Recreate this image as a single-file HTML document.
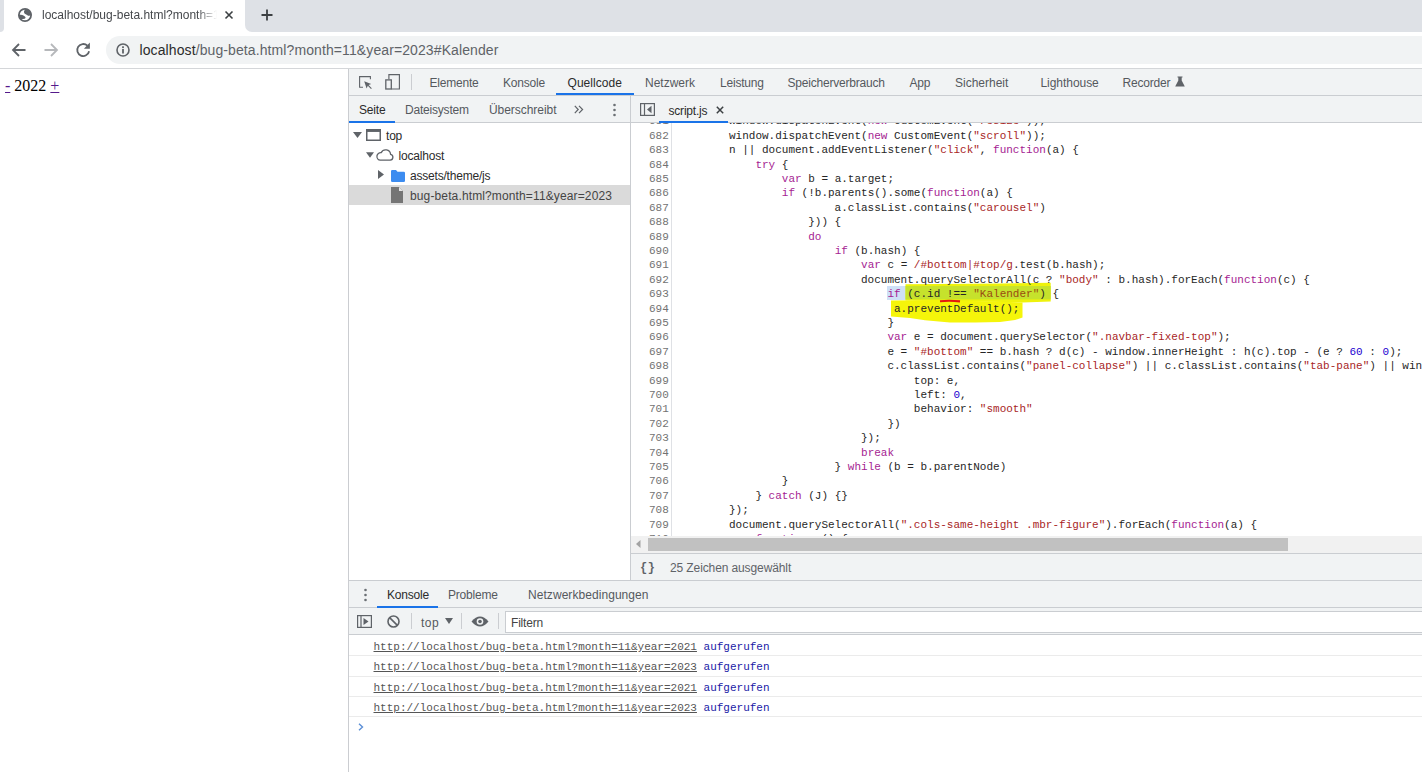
<!DOCTYPE html>
<html><head><meta charset="utf-8">
<style>
*{margin:0;padding:0;box-sizing:border-box}
html,body{width:1422px;height:772px;overflow:hidden;background:#fff;position:relative}
body{font-family:"Liberation Sans",sans-serif;font-size:12px;color:#333}
.a{position:absolute}
.t{position:absolute;white-space:pre;line-height:14px;font-size:12px;letter-spacing:-0.2px;color:#55595e}
.bg{position:absolute}
svg{position:absolute;overflow:visible}
.mono{font-family:"Liberation Mono",monospace;font-size:11px}
.ln{position:absolute;left:0;width:37.8px;text-align:right;font-family:"Liberation Mono",monospace;font-size:11px;line-height:14.4px;color:#727272;white-space:pre}
.cl{position:absolute;left:45.2px;font-family:"Liberation Mono",monospace;font-size:11px;line-height:14.4px;color:#262626;white-space:pre}
i{font-style:normal}
i.k{color:#a51d92}
i.s{color:#a8261f}
i.n{color:#1c00cf}
.cm{position:absolute;left:373.5px;font-family:"Liberation Mono",monospace;font-size:11px;line-height:14px;white-space:pre;color:#555}
.cm u{color:#555;text-decoration:underline}
.cm b{font-weight:normal;color:#1a1aa6}
</style></head><body>

<!-- Chrome tab strip -->
<div class="bg" style="left:0;top:0;width:4px;height:32px;background:#dee1e6;border-bottom-right-radius:5px"></div>
<div class="bg" style="left:245px;top:0;width:1177px;height:32px;background:#dee1e6;border-bottom-left-radius:7px"></div>
<div class="bg" style="left:0;top:0;width:1422px;height:68px;background:transparent"></div>
<div class="bg" style="left:0;top:32px;width:1422px;height:36px;background:#fff"></div>
<div class="bg" style="left:0;top:68px;width:1422px;height:1px;background:#d4d6d9"></div>

<!-- tab -->
<svg style="left:18px;top:7.75px" width="14" height="14" viewBox="0 0 14 14">
  <defs><clipPath id="gc"><circle cx="7" cy="7" r="6.5"/></clipPath></defs>
  <circle cx="7" cy="7" r="6.1" fill="#fff" stroke="#5f6368" stroke-width="1.8"/>
  <g clip-path="url(#gc)" fill="#5f6368">
  <path d="M7.8 0.5C6.4 2.0 5.6 3.6 6.2 4.9C6.8 6.2 8.6 6.4 9.4 7.3C10.4 8.2 12.2 8.0 14 6.8L14 0Z"/>
  <path d="M0 6.9C2.5 6.7 4.8 7.0 6.6 8.2C7.9 9.0 7.9 10.2 6.6 10.7C5.2 11.1 3.0 11.0 0 11Z"/>
  </g>
</svg>
<div class="t" style="left:42px;top:8px;color:#45484c;letter-spacing:0;width:175px;overflow:hidden;-webkit-mask-image:linear-gradient(to right,#000 155px,transparent 175px)">localhost/bug-beta.html?month=11&amp;year=2023#Kalender</div>
<svg style="left:224px;top:10px" width="10" height="10" viewBox="0 0 10 10"><path d="M1.5 1.5L8.5 8.5M8.5 1.5L1.5 8.5" stroke="#3c4043" stroke-width="1.6"/></svg>
<svg style="left:261px;top:9px" width="12" height="12" viewBox="0 0 12 12"><path d="M6 0.5V11.5M0.5 6H11.5" stroke="#3c4043" stroke-width="1.8"/></svg>

<!-- toolbar -->
<svg style="left:12px;top:43px" width="14" height="14" viewBox="0 0 14 14"><path d="M13.5 7H1.5M7 1L1 7L7 13" fill="none" stroke="#5f6368" stroke-width="1.8"/></svg>
<svg style="left:44px;top:43px" width="14" height="14" viewBox="0 0 14 14"><path d="M0.5 7H12.5M7 1L13 7L7 13" fill="none" stroke="#b6b8bb" stroke-width="1.8"/></svg>
<svg style="left:76px;top:43px" width="14" height="14" viewBox="0 0 14 14"><path d="M13.1 8.2A6 6 0 1 1 11.4 2.7" fill="none" stroke="#5f6368" stroke-width="1.8"/><path d="M13.9 -0.5V5.7H7.9Z" fill="#5f6368"/></svg>
<div class="bg" style="left:106px;top:36px;width:1330px;height:28px;background:#f1f3f4;border-radius:14px"></div>
<svg style="left:116px;top:43px" width="14" height="14" viewBox="0 0 14 14"><circle cx="7" cy="7" r="6" fill="none" stroke="#5f6368" stroke-width="1.6"/><rect x="6.1" y="6" width="1.8" height="4.5" fill="#5f6368"/><rect x="6.1" y="3.3" width="1.8" height="1.8" fill="#5f6368"/></svg>
<div class="t" style="left:139.5px;top:42px;font-size:14px;line-height:16px;letter-spacing:0.1px;color:#2b2b2b">localhost<span style="color:#5f6368">/bug-beta.html?month=11&amp;year=2023#Kalender</span></div>

<!-- page content -->
<div class="t" style="left:5px;top:77px;font-family:'Liberation Serif',serif;font-size:16px;line-height:18px;letter-spacing:0;color:#000"><span style="color:#551a8b;text-decoration:underline">-</span> 2022 <span style="color:#551a8b;text-decoration:underline">+</span></div>

<!-- DevTools -->
<div class="bg" style="left:348px;top:69px;width:1px;height:703px;background:#cbcdd1"></div>
<div class="bg" style="left:349px;top:69px;width:1073px;height:26px;background:#f1f3f4"></div>
<div class="bg" style="left:349px;top:95px;width:1073px;height:1px;background:#cacdd1"></div>


<!-- main toolbar icons -->
<svg style="left:359px;top:76px" width="14" height="14" viewBox="0 0 14 14"><path d="M4 11.2H0.6V0.6H11.4V3.2" fill="none" stroke="#5f6368" stroke-width="1.1"/><path d="M5.2 5.2L12.2 7.9L9.6 9L12.8 12.2L12 13L8.8 9.8L7.6 12.4Z" fill="#5f6368"/></svg>
<svg style="left:385px;top:74px" width="16" height="16" viewBox="0 0 16 16"><path d="M3.9 5.3V0.6H14.4V15H6.5" fill="none" stroke="#5f6368" stroke-width="1.15"/><rect x="0.8" y="5.9" width="5.5" height="9.1" fill="none" stroke="#5f6368" stroke-width="1.3"/></svg>
<div class="bg" style="left:411px;top:74px;width:1px;height:16px;background:#cbcdd1"></div>
<div class="t" style="left:429.5px;top:76px">Elemente</div>
<div class="t" style="left:503px;top:76px">Konsole</div>
<div class="t" style="left:567.5px;top:76px;color:#2b2b2b;letter-spacing:0.05px">Quellcode</div>
<div class="bg" style="left:556px;top:93px;width:78px;height:2px;background:#1a73e8"></div>
<div class="t" style="left:645px;top:76px;letter-spacing:0">Netzwerk</div>
<div class="t" style="left:720px;top:76px">Leistung</div>
<div class="t" style="left:787.5px;top:76px">Speicherverbrauch</div>
<div class="t" style="left:909.5px;top:76px">App</div>
<div class="t" style="left:955px;top:76px;letter-spacing:0">Sicherheit</div>
<div class="t" style="left:1040.5px;top:76px;letter-spacing:-0.05px">Lighthouse</div>
<div class="t" style="left:1122.5px;top:76px">Recorder</div>
<svg style="left:1175px;top:76px" width="10" height="11" viewBox="0 0 10 11"><path d="M2.5 0.5H7.5V1.5H6.7V4.5L9.8 10.5H0.2L3.3 4.5V1.5H2.5Z" fill="#5f6368"/></svg>

<!-- Sources navigator -->
<div class="bg" style="left:349px;top:96px;width:281px;height:26px;background:#f1f3f4"></div>
<div class="bg" style="left:349px;top:122px;width:1073px;height:1px;background:#cacdd1"></div>
<div class="bg" style="left:630px;top:96px;width:1px;height:484px;background:#cacdd1"></div>
<div class="t" style="left:359px;top:103px;color:#2b2b2b">Seite</div>
<div class="bg" style="left:349px;top:121px;width:46px;height:2px;background:#1a73e8"></div>
<div class="t" style="left:405px;top:103px">Dateisystem</div>
<div class="t" style="left:489px;top:103px;letter-spacing:-0.05px">Überschreibt</div>
<svg style="left:574px;top:105px" width="10" height="9" viewBox="0 0 10 9"><path d="M0.8 0.8L4.2 4.5L0.8 8.2M5 0.8L8.6 4.5L5 8.2" fill="none" stroke="#5f6368" stroke-width="1.2"/></svg>
<svg style="left:612px;top:103px" width="5" height="14" viewBox="0 0 5 14"><circle cx="2.5" cy="2" r="1.3" fill="#6b6f74"/><circle cx="2.5" cy="7" r="1.3" fill="#6b6f74"/><circle cx="2.5" cy="12" r="1.3" fill="#6b6f74"/></svg>

<!-- tree -->
<svg style="left:353px;top:132px" width="9" height="6" viewBox="0 0 9 6"><path d="M0 0H9L4.5 6Z" fill="#5f6368"/></svg>
<svg style="left:366px;top:129px" width="15" height="12" viewBox="0 0 15 12"><rect x="0.75" y="0.75" width="13.5" height="10.5" fill="none" stroke="#5f6368" stroke-width="1.5"/><rect x="0.75" y="0.75" width="13.5" height="2.2" fill="#5f6368"/></svg>
<div class="t" style="left:386px;top:129px;color:#2b2b2b">top</div>
<svg style="left:366px;top:152px" width="8" height="6" viewBox="0 0 9 6"><path d="M0 0H9L4.5 6Z" fill="#5f6368"/></svg>
<svg style="left:376px;top:149px" width="18" height="12" viewBox="0 0 18 12"><path d="M4.3 11.2H14.2A3 3 0 0 0 14.6 5.3A5 5 0 0 0 5.2 3.6A3.8 3.8 0 0 0 4.3 11.2Z" fill="none" stroke="#5f6368" stroke-width="1.3"/></svg>
<div class="t" style="left:398.5px;top:149px;color:#2b2b2b">localhost</div>
<svg style="left:378px;top:170px" width="6" height="9" viewBox="0 0 6 9"><path d="M0 0V9L6 4.5Z" fill="#5f6368"/></svg>
<svg style="left:391px;top:170px" width="14" height="12" viewBox="0 0 14 12"><path d="M0 1.2Q0 0 1.2 0H5L6.5 1.8H12.8Q14 1.8 14 3V10.8Q14 12 12.8 12H1.2Q0 12 0 10.8Z" fill="#3c8cf0"/></svg>
<div class="t" style="left:410px;top:169px;color:#2b2b2b">assets/theme/js</div>
<div class="bg" style="left:349px;top:185px;width:281px;height:20px;background:#dadada"></div>
<svg style="left:391px;top:187px" width="12" height="16" viewBox="0 0 12 16"><path d="M0 0H8L12 4V16H0Z" fill="#757575"/><path d="M8 0V4H12Z" fill="#e6e6e6"/></svg>
<div class="t" style="left:410px;top:189px;color:#444;letter-spacing:0.13px">bug-beta.html?month=11&amp;year=2023</div>

<!-- editor toolbar -->
<div class="bg" style="left:631px;top:96px;width:791px;height:26px;background:#f1f3f4"></div>
<div class="bg" style="left:631px;top:122px;width:791px;height:1px;background:#cacdd1"></div>
<svg style="left:640px;top:103px" width="15" height="13" viewBox="0 0 15 13"><rect x="0.6" y="0.6" width="13.8" height="11.8" fill="none" stroke="#5f6368" stroke-width="1.2"/><path d="M4.5 0.6V12.4" stroke="#5f6368" stroke-width="1.2"/><path d="M11.5 2.8V10.2L7 6.5Z" fill="#5f6368"/></svg>
<div class="t" style="left:668.5px;top:104px;color:#2b2b2b">script.js</div>
<svg style="left:716px;top:106px" width="8" height="8" viewBox="0 0 8 8"><path d="M0.8 0.8L7.2 7.2M7.2 0.8L0.8 7.2" stroke="#3c4043" stroke-width="1.5"/></svg>
<div class="bg" style="left:659px;top:121px;width:69px;height:2px;background:#1a73e8"></div>

<div id="code" style="position:absolute;left:631px;top:123px;width:791px;height:413px;overflow:hidden;background:#fff">
<div class="bg" style="left:40px;top:0;width:1px;height:413px;background:#dfe1e5"></div>
<!--HL-->
<div class="bg" style="left:256px;top:163px;width:19px;height:13.5px;background:#cfe0f6"></div>
<svg style="left:0;top:0" width="791" height="413"><polygon points="274.5,161.2 369.0,160.6 419.7,159.8 419.7,178.5 391.5,179.4 274.5,177.5" fill="#eef20c"/><polygon points="260.0,177.5 309.0,177.0 391.5,179.5 391.5,194.5 384.0,197.0 369.0,199.0 344.0,199.6 319.0,199.6 294.0,197.2 279.0,195.0 260.0,193.5" fill="#f5f50a"/><rect x="274.5" y="163" width="145.2" height="13.4" fill="#c6e22c"/></svg>
<div class="ln" style="top:-8.6px">681</div><div class="cl" style="top:-8.6px">        window.dispatchEvent(<i class="k">new</i> CustomEvent(<i class="s">"resize"</i>));</div>
<div class="ln" style="top:5.8px">682</div><div class="cl" style="top:5.8px">        window.dispatchEvent(<i class="k">new</i> CustomEvent(<i class="s">"scroll"</i>));</div>
<div class="ln" style="top:20.2px">683</div><div class="cl" style="top:20.2px">        n || document.addEventListener(<i class="s">"click"</i>, <i class="k">function</i>(a) {</div>
<div class="ln" style="top:34.6px">684</div><div class="cl" style="top:34.6px">            <i class="k">try</i> {</div>
<div class="ln" style="top:49.0px">685</div><div class="cl" style="top:49.0px">                <i class="k">var</i> b = a.target;</div>
<div class="ln" style="top:63.4px">686</div><div class="cl" style="top:63.4px">                <i class="k">if</i> (!b.parents().some(<i class="k">function</i>(a) {</div>
<div class="ln" style="top:77.8px">687</div><div class="cl" style="top:77.8px">                        a.classList.contains(<i class="s">"carousel"</i>)</div>
<div class="ln" style="top:92.2px">688</div><div class="cl" style="top:92.2px">                    })) {</div>
<div class="ln" style="top:106.6px">689</div><div class="cl" style="top:106.6px">                    <i class="k">do</i></div>
<div class="ln" style="top:121.0px">690</div><div class="cl" style="top:121.0px">                        <i class="k">if</i> (b.hash) {</div>
<div class="ln" style="top:135.4px">691</div><div class="cl" style="top:135.4px">                            <i class="k">var</i> c = <i class="s">/#bottom|#top/g</i>.test(b.hash);</div>
<div class="ln" style="top:149.8px">692</div><div class="cl" style="top:149.8px">                            document.querySelectorAll(c ? <i class="s">"body"</i> : b.hash).forEach(<i class="k">function</i>(c) {</div>
<div class="ln" style="top:164.2px">693</div><div class="cl" style="top:164.2px">                                <i class="k">if</i> (c.id !== <i class="s" style="color:#9a4a12">"Kalender"</i>) {</div>
<div class="ln" style="top:178.6px">694</div><div class="cl" style="top:178.6px">                                 a.preventDefault();</div>
<div class="ln" style="top:193.0px">695</div><div class="cl" style="top:193.0px">                                }</div>
<div class="ln" style="top:207.4px">696</div><div class="cl" style="top:207.4px">                                <i class="k">var</i> e = document.querySelector(<i class="s">".navbar-fixed-top"</i>);</div>
<div class="ln" style="top:221.8px">697</div><div class="cl" style="top:221.8px">                                e = <i class="s">"#bottom"</i> == b.hash ? d(c) - window.innerHeight : h(c).top - (e ? <i class="n">60</i> : <i class="n">0</i>);</div>
<div class="ln" style="top:236.2px">698</div><div class="cl" style="top:236.2px">                                c.classList.contains(<i class="s">"panel-collapse"</i>) || c.classList.contains(<i class="s">"tab-pane"</i>) || window.scrollTo({</div>
<div class="ln" style="top:250.6px">699</div><div class="cl" style="top:250.6px">                                    top: e,</div>
<div class="ln" style="top:265.0px">700</div><div class="cl" style="top:265.0px">                                    left: <i class="n">0</i>,</div>
<div class="ln" style="top:279.4px">701</div><div class="cl" style="top:279.4px">                                    behavior: <i class="s">"smooth"</i></div>
<div class="ln" style="top:293.8px">702</div><div class="cl" style="top:293.8px">                                })</div>
<div class="ln" style="top:308.2px">703</div><div class="cl" style="top:308.2px">                            });</div>
<div class="ln" style="top:322.6px">704</div><div class="cl" style="top:322.6px">                            <i class="k">break</i></div>
<div class="ln" style="top:337.0px">705</div><div class="cl" style="top:337.0px">                        } <i class="k">while</i> (b = b.parentNode)</div>
<div class="ln" style="top:351.4px">706</div><div class="cl" style="top:351.4px">                }</div>
<div class="ln" style="top:365.8px">707</div><div class="cl" style="top:365.8px">            } <i class="k">catch</i> (J) {}</div>
<div class="ln" style="top:380.2px">708</div><div class="cl" style="top:380.2px">        });</div>
<div class="ln" style="top:394.6px">709</div><div class="cl" style="top:394.6px">        document.querySelectorAll(<i class="s">".cols-same-height .mbr-figure"</i>).forEach(<i class="k">function</i>(a) {</div>
<div class="ln" style="top:409.0px">710</div><div class="cl" style="top:409.0px">            <i class="k">function</i> c() {</div>
<!--HL2-->
<svg style="left:0;top:0" width="791" height="413"><path d="M309 178.2 Q319 177.3 329 178.4" fill="none" stroke="#e3170f" stroke-width="2.1"/></svg>
</div>


<!-- scrollbar + status -->
<div class="bg" style="left:631px;top:536px;width:791px;height:17px;background:#f1f1f1"></div>
<svg style="left:636px;top:540px" width="5" height="8" viewBox="0 0 5 8"><path d="M4.5 0V8L0 4Z" fill="#a3a3a3"/></svg>
<div class="bg" style="left:648px;top:538px;width:640px;height:13px;background:#c1c1c1"></div>
<div class="bg" style="left:631px;top:553px;width:791px;height:1px;background:#cacdd1"></div>
<div class="bg" style="left:631px;top:554px;width:791px;height:26px;background:#f1f3f4"></div>
<div class="t" style="left:640px;top:561px;font-family:'Liberation Mono',monospace;font-size:12px;font-weight:bold;color:#5f6368;letter-spacing:0.5px">{}</div>
<div class="t" style="left:670px;top:561px;color:#5f6368;letter-spacing:-0.11px">25 Zeichen ausgewählt</div>

<!-- drawer -->
<div class="bg" style="left:349px;top:580px;width:1073px;height:1px;background:#cacdd1"></div>
<div class="bg" style="left:349px;top:581px;width:1073px;height:26px;background:#f1f3f4"></div>
<div class="bg" style="left:349px;top:607px;width:1073px;height:1px;background:#cacdd1"></div>
<svg style="left:363px;top:588px" width="5" height="14" viewBox="0 0 5 14"><circle cx="2.5" cy="2" r="1.3" fill="#6b6f74"/><circle cx="2.5" cy="7" r="1.3" fill="#6b6f74"/><circle cx="2.5" cy="12" r="1.3" fill="#6b6f74"/></svg>
<div class="t" style="left:387px;top:588px;color:#2b2b2b">Konsole</div>
<div class="bg" style="left:377px;top:606px;width:61px;height:2px;background:#1a73e8"></div>
<div class="t" style="left:448px;top:588px">Probleme</div>
<div class="t" style="left:528px;top:588px;letter-spacing:0.06px">Netzwerkbedingungen</div>

<div class="bg" style="left:349px;top:608px;width:1073px;height:26px;background:#f1f3f4"></div>
<div class="bg" style="left:349px;top:634px;width:1073px;height:1px;background:#cacdd1"></div>
<svg style="left:357px;top:615px" width="15" height="13" viewBox="0 0 15 13"><rect x="0.6" y="0.6" width="13.8" height="11.8" fill="none" stroke="#5f6368" stroke-width="1.2"/><path d="M4 0.6V12.4" stroke="#5f6368" stroke-width="1.2"/><path d="M6.5 3V10L11.5 6.5Z" fill="#5f6368"/></svg>
<svg style="left:387px;top:615px" width="13" height="13" viewBox="0 0 13 13"><circle cx="6.5" cy="6.5" r="5.5" fill="none" stroke="#5f6368" stroke-width="1.6"/><path d="M2.6 2.6L10.4 10.4" stroke="#5f6368" stroke-width="1.6"/></svg>
<div class="bg" style="left:411px;top:613px;width:1px;height:16px;background:#cbcdd1"></div>
<div class="t" style="left:421px;top:616px;letter-spacing:0.5px">top</div>
<svg style="left:445px;top:618px" width="8" height="6" viewBox="0 0 8 6"><path d="M0 0H8L4 6Z" fill="#5f6368"/></svg>
<div class="bg" style="left:461px;top:613px;width:1px;height:16px;background:#cbcdd1"></div>
<svg style="left:471px;top:616px" width="18" height="11" viewBox="0 0 18 11"><path d="M0.5 5.5Q9 -4.5 17.5 5.5Q9 15.5 0.5 5.5Z" fill="#5f6368"/><circle cx="9" cy="5.5" r="3.3" fill="#f1f3f4"/><circle cx="9" cy="5.5" r="1.8" fill="#5f6368"/></svg>
<div class="bg" style="left:498px;top:613px;width:1px;height:16px;background:#cbcdd1"></div>
<div class="bg" style="left:505px;top:611px;width:930px;height:22px;background:#fff;border:1px solid #cacdd1"></div>
<div class="t" style="left:511px;top:616px;color:#444">Filtern</div>

<!-- console messages -->
<div class="bg" style="left:349px;top:655px;width:1073px;height:1px;background:#ebebeb"></div>
<div class="bg" style="left:349px;top:676px;width:1073px;height:1px;background:#ebebeb"></div>
<div class="bg" style="left:349px;top:696px;width:1073px;height:1px;background:#ebebeb"></div>
<div class="bg" style="left:349px;top:716px;width:1073px;height:1px;background:#ebebeb"></div>
<div class="cm" style="top:640px"><u>http://localhost/bug-beta.html?month=11&amp;year=2021</u> <b>aufgerufen</b></div>
<div class="cm" style="top:660px"><u>http://localhost/bug-beta.html?month=11&amp;year=2023</u> <b>aufgerufen</b></div>
<div class="cm" style="top:681px"><u>http://localhost/bug-beta.html?month=11&amp;year=2021</u> <b>aufgerufen</b></div>
<div class="cm" style="top:701px"><u>http://localhost/bug-beta.html?month=11&amp;year=2023</u> <b>aufgerufen</b></div>
<svg style="left:358px;top:723px" width="6" height="8" viewBox="0 0 6 8"><path d="M1 0.8L4.5 4L1 7.2" fill="none" stroke="#5b8fd6" stroke-width="1.4"/></svg>

</body></html>
